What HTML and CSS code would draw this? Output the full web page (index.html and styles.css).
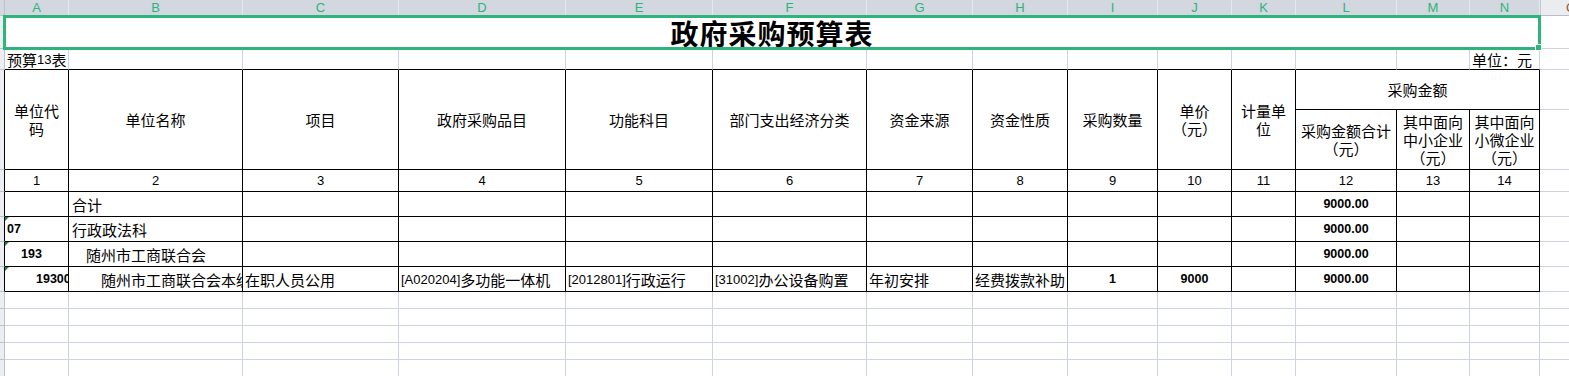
FILE: index.html
```html
<!DOCTYPE html>
<html lang="zh-CN">
<head>
<meta charset="utf-8">
<title>政府采购预算表</title>
<link rel="stylesheet" href="styles.css">
</head>
<body>
<div class="sheet">
  <div class="row colhead">
    <div class="stub"></div>
    <div>A</div><div>B</div><div>C</div><div>D</div><div>E</div><div>F</div><div>G</div>
    <div>H</div><div>I</div><div>J</div><div>K</div><div>L</div><div>M</div><div>N</div>
    <div class="next">O</div>
  </div>

  <div class="row title-row">
    <div class="stub"></div>
    <div class="title">政府采购预算表</div>
    <div></div>
  </div>

  <div class="row row2">
    <div class="stub"></div>
    <div class="top pl2">预算<span class="num">13</span>表</div>
    <div class="top"></div><div class="top"></div><div class="top"></div><div class="top"></div>
    <div class="top"></div><div class="top"></div><div class="top"></div><div class="top"></div>
    <div class="top"></div><div class="top"></div><div class="top"></div><div class="top"></div>
    <div class="top pl2">单位：元</div>
    <div></div>
  </div>

  <div class="hdr">
    <div class="stub tbl-left span2"></div>
    <div class="t h span2">单位代<br>码</div>
    <div class="t h span2">单位名称</div>
    <div class="t h span2">项目</div>
    <div class="t h span2">政府采购品目</div>
    <div class="t h span2">功能科目</div>
    <div class="t h span2">部门支出经济分类</div>
    <div class="t h span2">资金来源</div>
    <div class="t h span2">资金性质</div>
    <div class="t h span2">采购数量</div>
    <div class="t h span2">单价<br>（元）</div>
    <div class="t h span2">计量单<br>位</div>
    <div class="t h group">采购金额</div>
    <div></div>
    <div class="t h">采购金额合计<br>（元）</div>
    <div class="t h">其中面向<br>中小企业<br>（元）</div>
    <div class="t h">其中面向<br>小微企业<br>（元）</div>
    <div></div>
  </div>

  <div class="row nums">
    <div class="stub tbl-left"></div>
    <div class="t c">1</div><div class="t c">2</div><div class="t c">3</div><div class="t c">4</div>
    <div class="t c">5</div><div class="t c">6</div><div class="t c">7</div><div class="t c">8</div>
    <div class="t c">9</div><div class="t c">10</div><div class="t c">11</div><div class="t c">12</div>
    <div class="t c">13</div><div class="t c">14</div>
    <div></div>
  </div>

  <div class="row data">
    <div class="stub tbl-left"></div>
    <div class="t"></div>
    <div class="t pl3">合计</div>
    <div class="t"></div><div class="t"></div><div class="t"></div><div class="t"></div>
    <div class="t"></div><div class="t"></div><div class="t"></div><div class="t"></div><div class="t"></div>
    <div class="t c amt">9000.00</div>
    <div class="t"></div><div class="t"></div>
    <div></div>
  </div>

  <div class="row data">
    <div class="stub tbl-left"></div>
    <div class="t code flag pl2">07</div>
    <div class="t pl3">行政政法科</div>
    <div class="t"></div><div class="t"></div><div class="t"></div><div class="t"></div>
    <div class="t"></div><div class="t"></div><div class="t"></div><div class="t"></div><div class="t"></div>
    <div class="t c amt">9000.00</div>
    <div class="t"></div><div class="t"></div>
    <div></div>
  </div>

  <div class="row data">
    <div class="stub tbl-left"></div>
    <div class="t code flag pl16">193</div>
    <div class="t pl17">随州市工商联合会</div>
    <div class="t"></div><div class="t"></div><div class="t"></div><div class="t"></div>
    <div class="t"></div><div class="t"></div><div class="t"></div><div class="t"></div><div class="t"></div>
    <div class="t c amt">9000.00</div>
    <div class="t"></div><div class="t"></div>
    <div></div>
  </div>

  <div class="row data">
    <div class="stub tbl-left"></div>
    <div class="t code flag pl31">193001</div>
    <div class="t pl32">随州市工商联合会本级</div>
    <div class="t pl2">在职人员公用</div>
    <div class="t pl2"><span class="num">[A020204]</span>多功能一体机</div>
    <div class="t pl2"><span class="num">[2012801]</span>行政运行</div>
    <div class="t pl2"><span class="num">[31002]</span>办公设备购置</div>
    <div class="t pl2">年初安排</div>
    <div class="t pl2">经费拨款补助</div>
    <div class="t c amt">1</div>
    <div class="t c amt">9000</div>
    <div class="t"></div>
    <div class="t c amt">9000.00</div>
    <div class="t"></div><div class="t"></div>
    <div></div>
  </div>

  <div class="row empty">
    <div class="stub"></div>
    <div></div><div></div><div></div><div></div><div></div><div></div><div></div>
    <div></div><div></div><div></div><div></div><div></div><div></div><div></div><div></div>
  </div>
  <div class="row empty">
    <div class="stub"></div>
    <div></div><div></div><div></div><div></div><div></div><div></div><div></div>
    <div></div><div></div><div></div><div></div><div></div><div></div><div></div><div></div>
  </div>
  <div class="row empty">
    <div class="stub"></div>
    <div></div><div></div><div></div><div></div><div></div><div></div><div></div>
    <div></div><div></div><div></div><div></div><div></div><div></div><div></div><div></div>
  </div>
  <div class="row empty">
    <div class="stub"></div>
    <div></div><div></div><div></div><div></div><div></div><div></div><div></div>
    <div></div><div></div><div></div><div></div><div></div><div></div><div></div><div></div>
  </div>
  <div class="row empty">
    <div class="stub"></div>
    <div></div><div></div><div></div><div></div><div></div><div></div><div></div>
    <div></div><div></div><div></div><div></div><div></div><div></div><div></div><div></div>
  </div>

  <div class="selection"><span class="handle"></span></div>
</div>
</body>
</html>
```

FILE: styles.css
```css
:root {
  --cols: 5px 64px 174px 156px 167px 147px 154px 106px 95px 90px 74px 64px 101px 73px 70px 62px;
  --grid: #cdd3df;
  --green: #2db47b;
}

html, body {
  margin: 0;
  padding: 0;
  background: #ffffff;
}

body {
  width: 1569px;
  height: 376px;
  overflow: hidden;
  font-family: "Noto Sans CJK SC", sans-serif;
  font-size: 15px;
  color: #000;
}

.sheet {
  position: relative;
  display: flex;
  flex-direction: column;
  width: 1640px;
}

.row,
.hdr {
  display: grid;
  grid-template-columns: var(--cols);
}

.row > div,
.hdr > div {
  box-sizing: border-box;
  border-right: 1px solid var(--grid);
  border-bottom: 1px solid var(--grid);
  display: flex;
  align-items: center;
  overflow: hidden;
  white-space: nowrap;
  min-width: 0;
  position: relative;
}

/* row header stub on the left */
.row > .stub,
.hdr > .stub {
  background: #eceef2;
  border-right-color: #bcc2cc;
  border-bottom-color: #bcc2cc;
}
.row > .stub.tbl-left,
.hdr > .stub.tbl-left {
  border-right-color: #000;
}

/* column letters */
.colhead { height: 16px; }
.colhead > div {
  background: #d3d7df;
  border-right-color: #e4e7ec;
  border-bottom-color: #b9bec8;
  justify-content: center;
  font-family: "Liberation Sans", sans-serif;
  font-size: 13px;
  line-height: 1;
  color: var(--green);
}
.colhead > .stub { background: #d3d7df; }
.colhead > .next {
  background: #eaecf0;
  color: #8a5a2a;
  border-left: 1px solid #c3c8d0;
}

/* title */
.title-row { height: 33px; }
.title {
  grid-column: 2 / 16;
  justify-content: center;
  font-size: 28px;
  line-height: 1;
  font-weight: 700;
  letter-spacing: 1px;
  padding-top: 1px;
}

/* row 2 */
.row2 { height: 21px; }
.row2 > .top { border-bottom-color: #000; }

/* table header */
.hdr {
  grid-template-rows: 40px 60px;
  height: 100px;
}
.span2 { grid-row: span 2; }
.group { grid-column: span 3; }

.t {
  border-right-color: #000 !important;
  border-bottom-color: #000 !important;
}
.h {
  justify-content: center;
  text-align: center;
  white-space: normal !important;
  line-height: 18px;
  padding: 0 3px;
}

.nums { height: 22px; }
.nums > .c {
  font-family: "Liberation Sans", sans-serif;
  font-size: 13px;
}

.c { justify-content: center; }

.data { height: 25px; }
.empty { height: 17px; }

.num {
  font-family: "Liberation Sans", sans-serif;
  font-size: 13px;
}

.amt,
.code {
  font-family: "Liberation Sans", sans-serif;
  font-size: 12.5px;
  font-weight: 700;
}

.pl2 { padding-left: 2px; }
.pl3 { padding-left: 3px; }
.pl16 { padding-left: 16px; }
.pl17 { padding-left: 17px; }
.pl31 { padding-left: 31px; }
.pl32 { padding-left: 32px; }

/* "number stored as text" marker */
.flag::before {
  content: "";
  position: absolute;
  left: 0;
  top: 0;
  border-top: 4px solid #1c8a3c;
  border-right: 4px solid transparent;
}

/* selected merged title cell */
.selection {
  position: absolute;
  left: 3px;
  top: 15px;
  width: 1538px;
  height: 35px;
  box-sizing: border-box;
  border: 3px solid var(--green);
  pointer-events: none;
}
.handle {
  position: absolute;
  right: -4px;
  bottom: -4px;
  width: 5px;
  height: 5px;
  background: var(--green);
  border: 1px solid #ffffff;
}
```
